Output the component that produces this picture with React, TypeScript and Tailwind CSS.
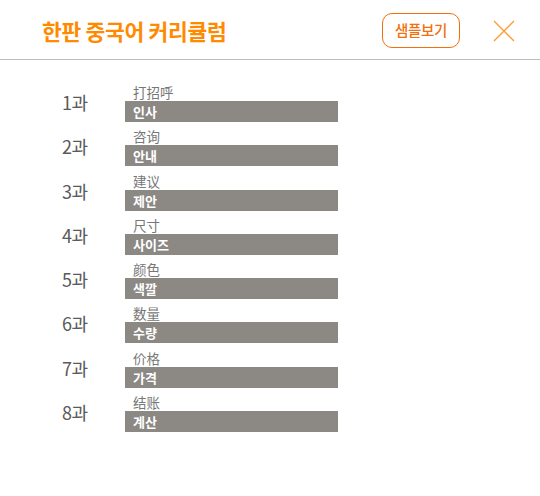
const lessons = [
  { no: 1, zh: '打招呼', ko: '인사' },
  { no: 2, zh: '咨询', ko: '안내' },
  { no: 3, zh: '建议', ko: '제안' },
  { no: 4, zh: '尺寸', ko: '사이즈' },
  { no: 5, zh: '颜色', ko: '색깔' },
  { no: 6, zh: '数量', ko: '수량' },
  { no: 7, zh: '价格', ko: '가격' },
  { no: 8, zh: '结账', ko: '계산' },
]

export default function App() {
  return (
    <div className="w-[540px] h-[496px] bg-white font-['Noto_Sans_CJK_KR',sans-serif]">
      {/* Header */}
      <div className="h-[60px] flex items-center border-b border-[#bdbdbd] pl-[42px] pr-[25px]">
        <h1 className="text-[21.5px] font-bold text-[#ff8a00] tracking-[-0.3px] flex-1 leading-none pt-[2px]">
          한판 중국어 커리큘럼
        </h1>
        <button className="w-[78px] h-[35px] mt-[1px] border border-[#f26f0c] rounded-[10px] text-[14.5px] font-medium text-[#f26f0c] leading-none tracking-[-0.3px]">
          샘플보기
        </button>
        <button className="ml-[33px] w-[22px] h-[22px] mt-[2px]">
          <svg viewBox="0 0 22 22" width="22" height="22" fill="none" stroke="#ff9a2e" strokeWidth="1.3">
            <path d="M1 1 L21 21 M21 1 L1 21" />
          </svg>
        </button>
      </div>

      {/* Lessons */}
      <div className="pt-[23px] flex flex-col">
        {lessons.map((l) => (
          <div key={l.no} className="h-[44.3px] flex items-start">
            <div className="w-[125px] h-[39px] flex items-center pl-[62px] text-[18px] text-[#5a5a5a] tracking-[-0.5px]">
              {l.no}과
            </div>
            <div className="flex flex-col">
              <div className="h-[18px] pl-[8px] text-[13.5px] leading-[18px] text-[#777]">
                {l.zh}
              </div>
              <div className="w-[213px] h-[21px] bg-[#8c8884] pl-[8px] text-[13px] font-bold leading-[21px] text-white">
                {l.ko}
              </div>
            </div>
          </div>
        ))}
      </div>
    </div>
  )
}
